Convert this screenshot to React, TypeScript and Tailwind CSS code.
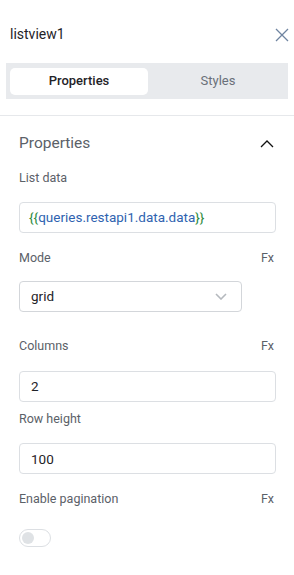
import { useState } from "react";

const Label = ({ text, fx }: { text: string; fx?: boolean }) => (
    <div className="flex items-center justify-between text-[12.5px] text-[#5b6168]">
        <span>{text}</span>
        {fx && <span className="pr-[1px]">Fx</span>}
    </div>
);

const TextBox = ({ value }: { value: string }) => (
    <div className="mt-[15px] flex h-[31px] w-[257px] items-center rounded-[4px] border border-[#dcdfe3] px-[11px] text-[13.5px] text-[#1f2328]">
        {value}
    </div>
);

export default function App() {
    const [tab, setTab] = useState("properties");
    const [paginate, setPaginate] = useState(false);

    return (
        <div className="h-[575px] w-[294px] bg-white font-['Roboto',sans-serif]">
            <div className="flex items-center justify-between pl-[10px] pr-[4px] pt-[24px]">
                <span className="text-[14px] text-[#1f2328]">listview1</span>
                <svg width="14" height="14" viewBox="0 0 14 14" className="mr-[1px]">
                    <path d="M1 1L13 13M13 1L1 13" stroke="#6f84a0" strokeWidth="1.3" />
                </svg>
            </div>

            <div className="mx-[6px] mt-[18px] flex h-[36px] items-center gap-[4px] bg-[#e8eaed] px-[4px]">
                <button
                    onClick={() => setTab("properties")}
                    className={`h-[27px] w-[138px] rounded-[5px] text-[13px] ${
                        tab === "properties"
                            ? "bg-white font-medium text-[#1f2328]"
                            : "text-[#6a7079]"
                    }`}
                >
                    Properties
                </button>
                <button
                    onClick={() => setTab("styles")}
                    className={`h-[27px] flex-1 rounded-[5px] text-[13px] ${
                        tab === "styles"
                            ? "bg-white font-medium text-[#1f2328]"
                            : "text-[#6a7079]"
                    }`}
                >
                    Styles
                </button>
            </div>

            <div className="mt-[16px] border-t border-[#e6e8eb] px-[19px]">
                <div className="mt-[16px] flex items-center justify-between">
                    <span className="text-[15.5px] text-[#5b6168]">Properties</span>
                    <svg width="14" height="9" viewBox="0 0 14 9" className="mr-[1px]">
                        <path d="M1 8L7 2L13 8" stroke="#111" strokeWidth="1.3" fill="none" />
                    </svg>
                </div>

                <div className="mt-[14px]">
                    <Label text="List data" />
                    <div className="mt-[14px] flex h-[31px] w-[257px] items-center rounded-[4px] border border-[#dcdfe3] px-[9px] text-[13.5px]">
                        <span className="text-[#2e8b3e]">{"{{"}</span>
                        <span className="text-[#2f63b0]">queries.restapi1.data.data</span>
                        <span className="text-[#2e8b3e]">{"}}"}</span>
                    </div>
                </div>

                <div className="mt-[16px]">
                    <Label text="Mode" fx />
                    <div className="mt-[13px] flex h-[31px] w-[223px] items-center justify-between rounded-[4px] border border-[#d3d6da] pl-[11px] pr-[14px] text-[13.5px] text-[#1f2328]">
                        <span>grid</span>
                        <svg width="12" height="7" viewBox="0 0 12 7">
                            <path d="M1 1L6 6L11 1" stroke="#b5b9be" strokeWidth="1.6" fill="none" />
                        </svg>
                    </div>
                </div>

                <div className="mt-[25px]">
                    <Label text="Columns" fx />
                    <TextBox value="2" />
                </div>

                <div className="mt-[8px]">
                    <Label text="Row height" />
                    <TextBox value="100" />
                </div>

                <div className="mt-[16px]">
                    <Label text="Enable pagination" fx />
                    <button
                        onClick={() => setPaginate(!paginate)}
                        className="mt-[20px] flex h-[18px] w-[32px] items-center rounded-full border border-[#dcdfe3] px-[2px]"
                    >
                        <span
                            className={`h-[12px] w-[12px] rounded-full bg-[#dfe2e5] ${
                                paginate ? "ml-auto" : ""
                            }`}
                        />
                    </button>
                </div>
            </div>
        </div>
    );
}
